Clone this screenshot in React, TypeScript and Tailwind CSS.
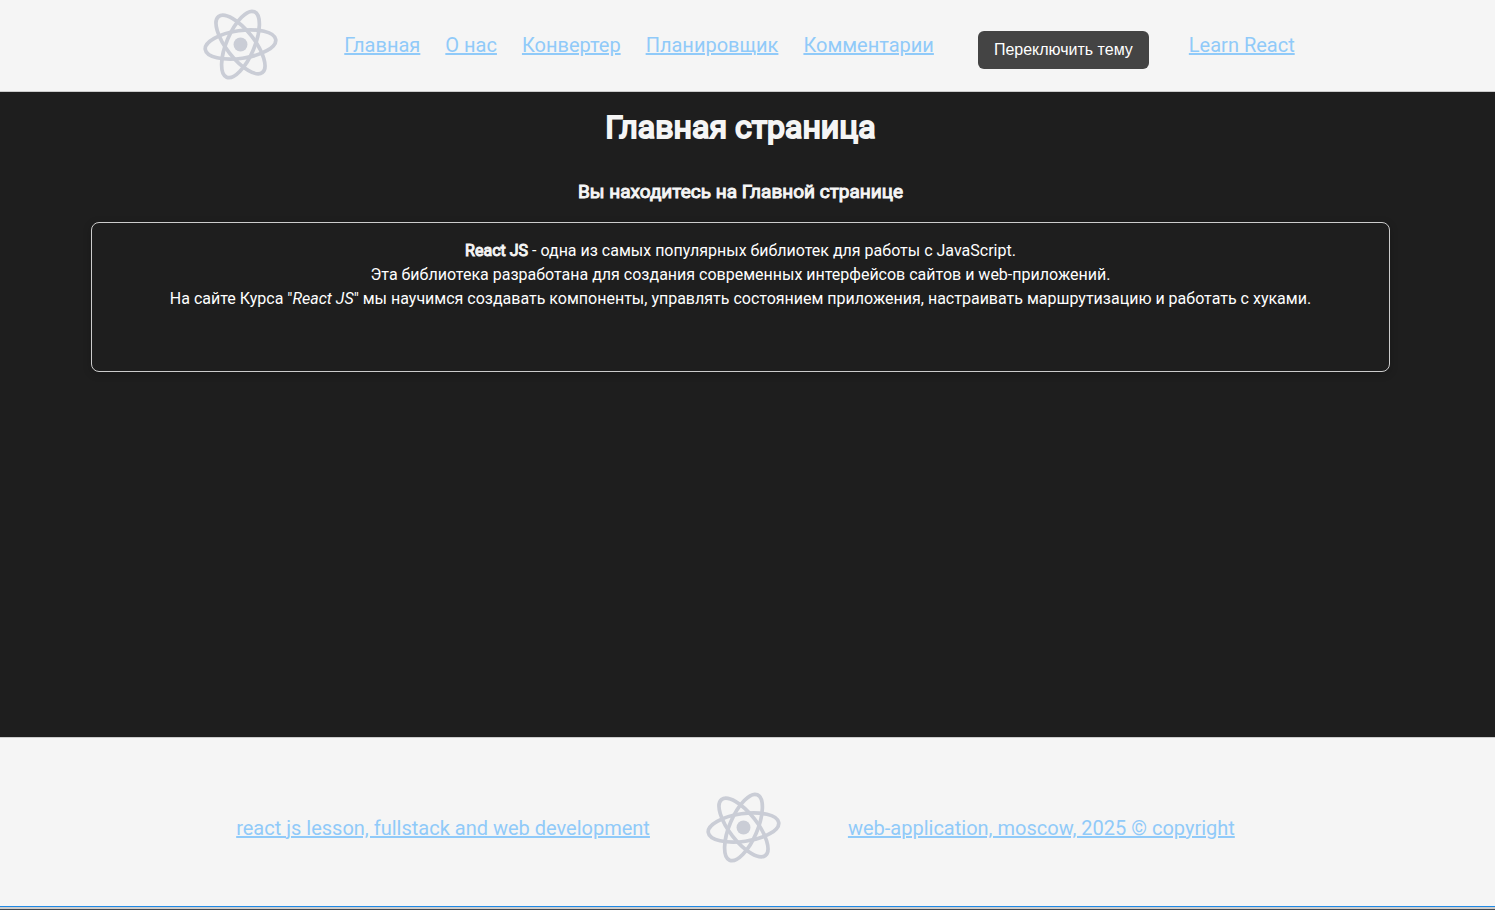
const ORBITS = [-8, 52, 113];

function ReactLogo() {
  return (
    <svg viewBox="-11.6 -11.6 23.2 23.2" className="h-[75px] w-[75px] shrink-0" role="img" aria-label="React">
      <circle r="2.15" fill="#cacdd6" />
      <g fill="none" stroke="#cacdd6" strokeWidth="1.15">
        {ORBITS.map((angle) => (
          <ellipse key={angle} rx="11" ry="4.3" transform={`rotate(${angle})`} />
        ))}
      </g>
    </svg>
  );
}

const LINKS = ['Главная', 'О нас', 'Конвертер', 'Планировщик', 'Комментарии'];

export default function App() {
  return (
    <div className="flex min-h-screen flex-col bg-[#1e1e1e] font-['Roboto',sans-serif] text-white">
      <header className="flex items-center justify-center border-b border-[#cccccc] bg-[#f5f5f5] pt-[7px] pb-[9px] pl-[3px] text-xl text-[#90caf9]">
        <ReactLogo />
        <nav className="ml-[66px] flex gap-[25px]">
          {LINKS.map((label) => (
            <a key={label} href="#" className="underline">
              {label}
            </a>
          ))}
        </nav>
        <button
          type="button"
          className="mx-10 mt-[10px] ml-11 rounded-md bg-[#444444] px-4 py-[7px] font-['Liberation_Sans',Arial,sans-serif] text-base text-white"
        >
          Переключить тему
        </button>
        <a href="#" className="underline">
          Learn React
        </a>
      </header>

      <main className="flex-1 px-[91px] pr-[105px] text-center">
        <h1 className="mt-[15px] text-[32px] leading-10 font-normal text-[#f5f5f5] [-webkit-text-stroke:2px_#f5f5f5]">
          Главная страница
        </h1>
        <h3 className="mt-[33px] text-[19px] leading-6 font-normal text-[#f5f5f5] [-webkit-text-stroke:1px_#f5f5f5]">
          Вы находитесь на Главной странице
        </h3>
        <div className="mt-[18px] min-h-[150px] rounded-lg border border-[#cccccc] px-4 pt-4 shadow-[0_2px_8px_rgba(0,0,0,0.2)]">
          <p>
            <span className="text-[#f5f5f5] [-webkit-text-stroke:1px_#f5f5f5]">React JS</span> - одна из самых
            популярных библиотек для работы с JavaScript.
          </p>
          <p>Эта библиотека разработана для создания современных интерфейсов сайтов и web-приложений.</p>
          <p>
            На сайте Курса "<em>React JS</em>" мы научимся создавать компоненты, управлять состоянием приложения,
            настраивать маршрутизацию и работать с хуками.
          </p>
        </div>
      </main>

      <footer className="flex items-center justify-center border-t border-[#cccccc] bg-[#f5f5f5] pt-[52px] pr-6 pb-[41px] text-xl text-[#90caf9]">
        <a href="#" className="underline">
          react js lesson, fullstack and web development
        </a>
        <div className="mr-[67px] ml-14">
          <ReactLogo />
        </div>
        <a href="#" className="underline">
          web-application, moscow, 2025 © copyright
        </a>
      </footer>
      <div className="h-1 border-t border-b border-t-[#1e88e5] border-b-[#444950] bg-[#cccccc]" />
    </div>
  );
}
